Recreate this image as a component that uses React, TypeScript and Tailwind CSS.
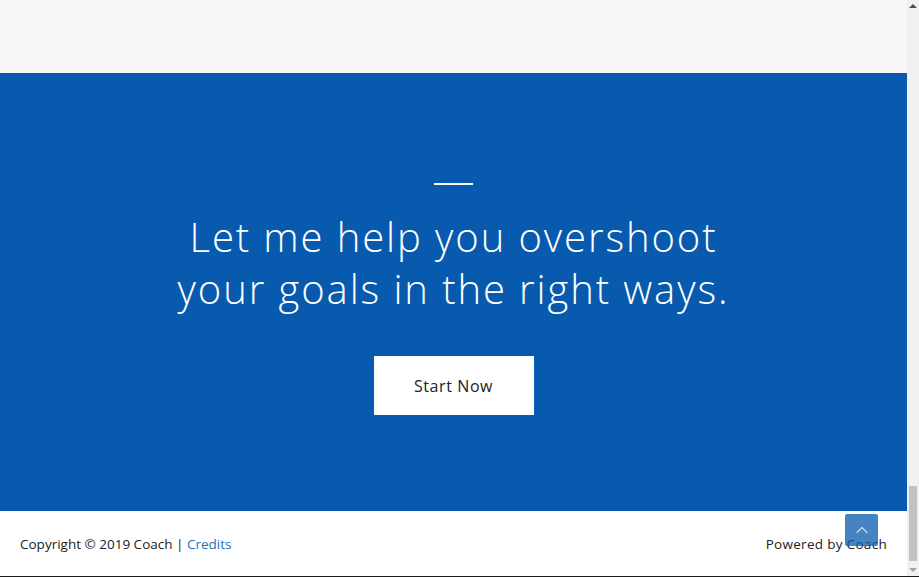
import { ChevronUp } from 'lucide-react'

const font = { fontFamily: '"Open Sans", "Liberation Sans", sans-serif' }

function Scrollbar() {
  return (
    <div className="w-[12px] shrink-0 bg-[#f1f1f1] flex flex-col items-center">
      <div className="h-[12px] w-full flex items-center justify-center">
        <div className="w-0 h-0 border-l-[4px] border-r-[4px] border-b-[4px] border-l-transparent border-r-transparent border-b-[#505050]" />
      </div>
      <div className="flex-1 w-full flex flex-col justify-end px-[2px]">
        <div className="h-[75px] bg-[#c1c1c1] mb-[3px]" />
      </div>
      <div className="h-[12px] w-full flex items-center justify-center">
        <div className="w-0 h-0 border-l-[4px] border-r-[4px] border-t-[4px] border-l-transparent border-r-transparent border-t-[#a3a3a3]" />
      </div>
    </div>
  )
}

export default function App() {
  return (
    <div className="w-[919px] h-[577px] flex overflow-hidden border-b border-[#1a1a1a]" style={font}>
      <div className="flex-1 flex flex-col">
        <div className="h-[73px] bg-[#f9f7f7]" />
        <section className="h-[438px] bg-[#075aad] flex flex-col items-center pt-[110px]">
          <div className="w-[39px] h-[2px] bg-white" />
          <h2 className="mt-[26px] text-white text-[40px] leading-[52px] font-light text-center tracking-[1.9px]">
            Let me help you overshoot
            <br />
            your goals in the right ways.
          </h2>
          <button className="mt-[41px] w-[160px] h-[59px] bg-white text-[#222] text-[16px] tracking-[0.6px]">
            Start Now
          </button>
        </section>
        <footer className="relative flex-1 bg-white flex items-center justify-between pl-[20px] pr-[20px] pt-[1px] text-[13.5px] text-[#222]">
          <span>
            Copyright © 2019 Coach | <a className="text-[#1e73be]">Credits</a>
          </span>
          <span className="tracking-[0.3px]">Powered by Coach</span>
          <div className="absolute right-[29px] top-[3px] w-[33px] h-[32px] rounded-[2px] bg-[#075aad]/75 flex items-center justify-center">
            <ChevronUp className="w-[20px] h-[20px] text-white/70" strokeWidth={1.5} />
          </div>
        </footer>
      </div>
      <Scrollbar />
    </div>
  )
}
